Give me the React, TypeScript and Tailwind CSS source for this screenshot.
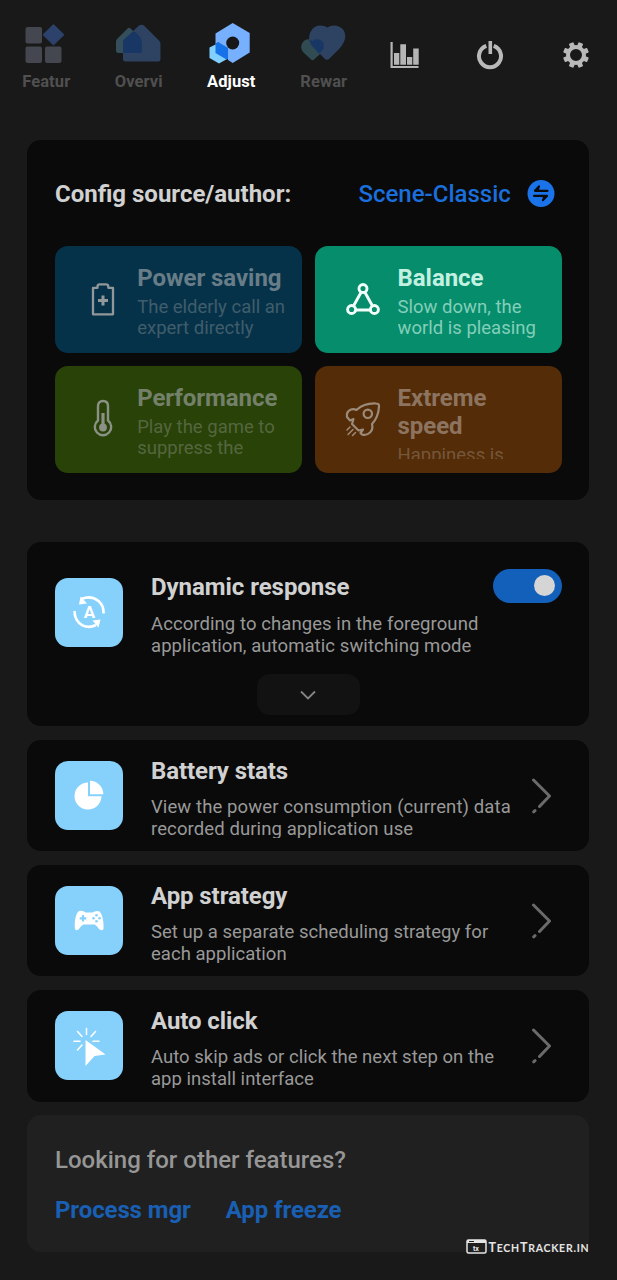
import type { ReactNode } from 'react';

function FeatureIcon() {
  return (
    <svg className="block h-[44px] w-[48px]" viewBox="0 0 48 44">
      <g fill="#44474f">
        <rect x="3.5" y="5" width="16.5" height="16.5" rx="2" />
        <rect x="3.5" y="24.5" width="16.5" height="16.5" rx="2" />
        <rect x="23" y="24.5" width="16.5" height="16.5" rx="2" />
      </g>
      <path d="M31.5 2.5 42 12.7 31.5 23 21 12.7Z" fill="#2c426b" stroke="#2c426b" strokeLinejoin="round" />
    </svg>
  );
}

function OverviewIcon() {
  return (
    <svg className="block h-[44px] w-[48px]" viewBox="0 0 48 44">
      <path d="M2 17 12.5 6.5Q14 5 15.5 6.500L26 16.500Q28 19 28 22V31H3.500Q1 31 1 28.500V20Q1 18 2 17Z" fill="#344e5b" />
      <path d="M8 18.500 23.500 4Q26.500 1.500 29.500 4L44 18.500Q45.500 20 45.500 22V37Q45.500 39.500 43 39.500H10.500Q8 39.500 8 37Z" fill="#2d4361" />
      <path d="M8 18.500 17.500 10Q19.500 9 21.500 11L25 15Q27 18 27 23V28.500Q27 31 24.500 31H8Z" fill="#193764" />
    </svg>
  );
}

function AdjustIcon() {
  return (
    <svg className="block h-[44px] w-[48px]" viewBox="0 0 48 44">
      <path d="M12.500 20.500 2.500 25.500V36L12 41.500 21 36.500V26Z" fill="#82d0ff" />
      <path d="M25.700 1 42.700 11V30.500L25.700 41 21 38V26L12 20.500 8.500 22V11.500Z" fill="#77b0ff" />
      <path d="M11 20 21 26V36.500L19.500 37.500 8.500 31V21.500Z" fill="#1672e8" />
      <circle cx="25.700" cy="21" r="6.500" fill="#171717" />
    </svg>
  );
}

function RewardIcon() {
  return (
    <svg className="block h-[44px] w-[48px]" viewBox="0 0 48 44">
      <path d="M3 20C6 16 10 17 12.500 19C16 16 21 17 23 20C26 25 23 29 19 33L14 37.500Q12.500 39 11 37.500L4 31C1 28 0 24 3 20Z" fill="#304b52" />
      <path d="M12 7.500C16 2 23 3 27.500 5.500C32 2 40 3 43.500 8C47 14 45 20 40 26L29.500 36.500Q27 39 24.500 36.500L13 25C8 20 8 13 12 7.500Z" fill="#2d4361" />
      <path d="M9.500 17.800 12.500 19C16 16 21 17 23 20C25 25 23 29 19 31.500L13 25Q10 22 9.500 17.800Z" fill="#193764" />
    </svg>
  );
}

function StatsIcon() {
  return (
    <svg className="block size-[30px]" viewBox="0 0 30 30" fill="#b5b5b5">
      <path d="M.5 2h2.200v24h25.800V28H.5z" />
      <path d="M4 13h5.300v11.800h-5.300zM10.300 4.200h5.700v20.600h-5.700zM17 17h5.300v7.800h-5.300zM23.200 8.500h5.500v16.300h-5.500z" />
    </svg>
  );
}

function PowerIcon() {
  return (
    <svg className="block size-[30px]" viewBox="0 0 30 30" fill="none" stroke="#b9b9b9">
      <path d="M10.300 5.900A11 11 0 1 0 17.700 5.900" strokeWidth="4" />
      <path d="M14.300 1v13" strokeWidth="3.600" />
    </svg>
  );
}

function GearIcon() {
  return (
    <svg className="block size-[30px]" viewBox="-15 -15 30 30" fill="#b9b9b9">
      <circle r="8" fill="none" stroke="#b9b9b9" strokeWidth="4" />
      {[22.5, 67.5, 112.5, 157.5, 202.5, 247.5, 292.5, 337.5].map((a) => (
        <path key={a} d="M-2.500-8.500V-12Q-2.500-13-1.500-13H1.500Q2.500-13 2.500-12V-8.500Z" transform={`rotate(${a})`} />
      ))}
    </svg>
  );
}

function BatteryIcon() {
  return (
    <svg className="block h-[34px] w-[24px]" viewBox="0 0 24 34" fill="none" stroke="#929799" strokeWidth="2.300">
      <path d="M2 5.800H6.500V4.500Q6.500 2.300 8.700 2.300H15Q17.300 2.300 17.300 4.500V5.800H22V32.300H2Z" strokeLinejoin="round" />
      <path d="M12 13.500v10M7 18.500h10" strokeWidth="3" />
    </svg>
  );
}

function BalanceIcon() {
  return (
    <svg className="block size-[36px]" viewBox="0 0 36 36" fill="none" stroke="#f2fffa" strokeWidth="2.900">
      <circle cx="18" cy="7.500" r="4" />
      <circle cx="6.600" cy="28.500" r="4" />
      <circle cx="29.400" cy="28.500" r="4" />
      <path d="M16 11.500 8.600 24.700M20 11.500l7.400 13.200M10.600 29h14.800" />
    </svg>
  );
}

function ThermometerIcon() {
  return (
    <svg className="block h-[40px] w-[24px]" viewBox="0 0 24 40" fill="none" stroke="#8b9185" strokeWidth="2.400">
      <path d="M7 7Q7 2 12 2T17 7V21.500A8.200 8.200 0 1 1 7 21.500Z" />
      <path d="M12 14v14" strokeWidth="3.200" />
      <circle cx="12" cy="28.500" r="3.900" fill="#8b9185" stroke="none" />
    </svg>
  );
}

function RocketIcon() {
  return (
    <svg className="block size-[38px]" viewBox="0 0 38 38" fill="none" stroke="#9c8b79" strokeWidth="2.200" strokeLinejoin="round" strokeLinecap="round">
      <path d="M9.500 19 6 20.500 3 17Q2 11.500 7 9.500Q9.500 8.500 12.500 10Q20 3 32 3.500Q35.500 3.500 35 6.500Q34.500 17 28 24Q29.500 29 26 32.500Q22 36 18 34.500L16.500 33 19 29.500 14.500 30.500 8 24Z" />
      <circle cx="23.800" cy="13.800" r="4.200" />
      <path d="M6 27 3 30M9 29.500 4 34.500M11.500 32.500 8.500 35.500" strokeWidth="1.500" />
    </svg>
  );
}

function SwapIcon() {
  return (
    <svg className="block size-[28px]" viewBox="0 0 28 28">
      <circle cx="14" cy="13.500" r="13.500" fill="#1a73e8" />
      <path d="M20.500 10.800H8L12 6.500M7 15.800H20L16 20.100" fill="none" stroke="#0a0a0a" strokeWidth="2.200" strokeLinecap="round" strokeLinejoin="round" />
      <path d="M7 11 12.300 5.500v5.500ZM21 15.700 15.700 21.200v-5.500Z" fill="#0a0a0a" />
    </svg>
  );
}

function AutoSwitchIcon() {
  return (
    <svg className="block size-[36px]" viewBox="0 0 36 36">
      <path d="M11 4.800Q20 1 27.500 7Q33 12 32.500 19.500M3.500 17Q3.500 27 11.500 31.300Q18 34.500 25 31" fill="none" stroke="#fff" strokeWidth="2.600" />
      <path d="M9.500 2.500 8 10.500 16 9.500ZM21.500 26.500 29.500 25.500 27.500 33.500Z" fill="#fff" />
      <text x="18.500" y="24" textAnchor="middle" fill="#fff" fontSize="17" fontWeight="700" fontFamily="Roboto, sans-serif">A</text>
    </svg>
  );
}

function PieIcon() {
  return (
    <svg className="block size-[36px]" viewBox="0 0 36 36" fill="#fff">
      <path d="M17 5.500V19.300H30.500A13.500 13.500 0 1 1 17 5.500Z" />
      <path d="M19 3.700A13.500 13.500 0 0 1 32.300 17.200H19Z" />
    </svg>
  );
}

function GamepadIcon() {
  return (
    <svg className="block size-[36px]" viewBox="0 0 36 36">
      <path d="M8 9Q12 8 14.500 10.500H21.500Q25 8 28.500 9.500C31.500 12 33 21 32.500 27Q31 29.500 28 27Q25 22.500 23 22.500H13Q11 22.500 8 27Q5 29.500 4 27C3 20 5 10.500 8 9Z" fill="#fff" />
      <path d="M12 13v6.500M8.700 16.300h6.600" stroke="#86d1fc" strokeWidth="2.200" />
      <g fill="#86d1fc"><circle cx="25.500" cy="13.300" r="1.300" /><circle cx="22.500" cy="16.300" r="1.300" /><circle cx="28.500" cy="16.300" r="1.300" /><circle cx="25.500" cy="19.300" r="1.300" /></g>
    </svg>
  );
}

function ClickIcon() {
  return (
    <svg className="block size-[42px]" viewBox="0 0 42 42">
      <path d="M17.500 15 37.500 29.500 26.500 31 17.500 41Z" fill="#fff" />
      <path d="M18.500 3.500v6M9.500 6.500 14 11.500M27.500 6.500 23 11.500M6 16.300h6M25 16.300h6M14 20 9.500 25" stroke="#fff" strokeWidth="1.500" strokeLinecap="round" />
    </svg>
  );
}

function Chevron() {
  return (
    <svg className="block h-[36px] w-[22px] shrink-0" viewBox="0 0 22 36" fill="none" stroke="#6b6b6b" strokeWidth="2.700" strokeLinecap="round">
      <path d="M3.500 2 19.500 18 9.500 28.500M3.700 33.800 5 32.700" strokeLinejoin="round" strokeWidth="3" />
    </svg>
  );
}

function Tab({ icon, label, active }: { icon: ReactNode; label: string; active?: boolean }) {
  return (
    <div className="flex w-[92.500px] flex-col items-center">
      {icon}
      <span className={`mt-[6px] text-[16.500px] font-bold leading-[20px] tracking-[0.100px] ${active ? 'text-white' : 'text-[#505050]'}`}>{label}</span>
    </div>
  );
}

function ModeTile({ icon, title, text, tone, titleTone, textTone }: { icon: ReactNode; title: ReactNode; text: ReactNode; tone: string; titleTone: string; textTone: string }) {
  return (
    <div className={`flex h-[106.500px] w-[246.700px] rounded-[13px] ${tone}`}>
      <div className="ml-[27.500px] flex w-[41px] shrink-0 items-center justify-center">{icon}</div>
      <div className="mt-[17.600px] ml-[13.700px] h-[75.500px] overflow-hidden whitespace-nowrap">
        <div className={`text-[24px] font-bold leading-[28px] tracking-[-0.050px] ${titleTone}`}>{title}</div>
        <div className={`mt-[5px] text-[18.500px] leading-[21.500px] ${textTone}`}>{text}</div>
      </div>
    </div>
  );
}

function IconBox({ children }: { children: ReactNode }) {
  return <div className="flex size-[68.500px] shrink-0 items-center justify-center rounded-[13px] bg-[#86d1fc]">{children}</div>;
}

function FeatureRow({ icon, title, tracking, first, second }: { icon: ReactNode; title: string; tracking: string; first: string; second: string }) {
  return (
    <section className="flex h-[111.200px] rounded-[14px] bg-[#0a0a0a] pt-[21px] pl-[27.600px]">
      <IconBox>{icon}</IconBox>
      <div className="-mt-[4px] ml-[27.500px] w-[378px] whitespace-nowrap">
        <h2 className="text-[24px] font-bold leading-[28px] tracking-[-0.080px] text-[#d1d1d1]">{title}</h2>
        <p className={`mt-[12px] h-[40.500px] overflow-hidden text-[18.500px] leading-[21.500px] text-[#999] ${tracking}`}>{first}<br />{second}</p>
      </div>
      <div className="mt-[16.500px] ml-[1px]"><Chevron /></div>
    </section>
  );
}

export default function App() {
  return (
    <div className="h-[1280px] w-[617px] overflow-hidden bg-[#191919] font-['Roboto',sans-serif]">
      <header className="flex h-[140px] pt-[22px]">
        <Tab icon={<FeatureIcon />} label="Featur" />
        <Tab icon={<OverviewIcon />} label="Overvi" />
        <Tab icon={<AdjustIcon />} label="Adjust" active />
        <Tab icon={<RewardIcon />} label="Rewar" />
        <div className="mt-[18px] ml-[20px] flex gap-[55.500px]">
          <StatsIcon />
          <PowerIcon />
          <GearIcon />
        </div>
      </header>

      <main className="ml-[27.400px] w-[562px]">
        <section className="h-[360px] rounded-[14px] bg-[#0a0a0a] px-[27.600px] pt-[38px]">
          <div className="flex h-[32px] items-center">
            <h1 className="text-[24px] font-bold leading-[28px] text-[#d1d1d1]">Config source/author:</h1>
            <span className="ml-auto text-[24px] font-medium leading-[28px] text-[#1a6fdd]">Scene-Classic</span>
            <div className="mr-[7px] ml-[16px]"><SwapIcon /></div>
          </div>
          <div className="mt-[36px] grid grid-cols-[246.700px_246.700px] gap-[13.700px]">
            <ModeTile icon={<BatteryIcon />} title="Power saving" text={<>The elderly call an<br />expert directly</>} tone="bg-[#053249]" titleTone="text-[#687d87]" textTone="text-[#405d6b]" />
            <ModeTile icon={<BalanceIcon />} title="Balance" text={<>Slow down, the<br />world is pleasing</>} tone="bg-[#068d6c]" titleTone="text-[#c3f1e1]" textTone="text-[#83cfba]" />
            <ModeTile icon={<ThermometerIcon />} title="Performance" text={<>Play the game to<br />suppress the</>} tone="bg-[#284208]" titleTone="text-[#74806a]" textTone="text-[#55663f]" />
            <ModeTile icon={<RocketIcon />} title={<>Extreme<br />speed</>} text="Happiness is" tone="bg-[#542c08]" titleTone="text-[#8c7460]" textTone="text-[#75573b]" />
          </div>
        </section>

        <section className="mt-[41.500px] h-[184.500px] rounded-[14px] bg-[#0a0a0a] pt-[27px] pl-[27.600px]">
          <div className="flex h-[105.500px]">
            <div className="mt-[9.500px]"><IconBox><AutoSwitchIcon /></IconBox></div>
            <div className="mt-[4.500px] ml-[27.500px] w-[342.500px] whitespace-nowrap">
              <h2 className="text-[24px] font-bold leading-[28px] tracking-[-0.050px] text-[#d1d1d1]">Dynamic response</h2>
              <p className="mt-[13px] text-[18.500px] leading-[21.500px] tracking-[0.080px] text-[#999]">According to changes in the foreground<br />application, automatic switching mode</p>
            </div>
            <div className="flex h-[34.500px] w-[68.500px] items-center justify-end rounded-full bg-[#1260ba] pr-[6.500px]">
              <div className="size-[21px] rounded-full bg-[#d5d5d5]" />
            </div>
          </div>
          <div className="ml-[202px] flex h-[41px] w-[103px] items-center justify-center rounded-[13px] bg-[#121212]">
            <svg className="block h-[10px] w-[16px]" viewBox="0 0 16 10" fill="none" stroke="#858585" strokeWidth="1.800"><path d="m1 1.500 7 7 7-7" /></svg>
          </div>
        </section>

        <div className="mt-[14px] flex flex-col gap-[14px]">
          <FeatureRow icon={<PieIcon />} title="Battery stats" tracking="tracking-[0.100px]" first="View the power consumption (current) data" second="recorded during application use" />
          <FeatureRow icon={<GamepadIcon />} title="App strategy" tracking="tracking-[0.030px]" first="Set up a separate scheduling strategy for" second="each application" />
          <FeatureRow icon={<ClickIcon />} title="Auto click" tracking="tracking-[0.020px]" first="Auto skip ads or click the next step on the" second="app install interface" />
        </div>

        <section className="mt-[13.700px] h-[137px] rounded-[14px] bg-[#202020] pt-[31px] pl-[27.600px]">
          <h2 className="text-[24px] font-medium leading-[28px] text-[#969696]">Looking for other features?</h2>
          <div className="mt-[21.500px] flex gap-[35px] text-[24px] font-bold leading-[28px] tracking-[-0.100px] text-[#195fb3]">
            <span>Process mgr</span>
            <span>App freeze</span>
          </div>
          <div className="mt-[13.500px] ml-[411.500px] flex items-center whitespace-nowrap text-[#e5e5e5]">
            <svg className="block h-[15px] w-[21px] shrink-0" viewBox="0 0 21 15"><rect x="1" y="1" width="19" height="13" rx="1.500" fill="none" stroke="currentColor" strokeWidth="1.500" /><path d="M1 1h19v3H1z" fill="currentColor" /><path d="M3 2.500h5" stroke="#222" /><text x="7" y="12" fill="currentColor" fontSize="7" fontWeight="700">tx</text></svg>
            <span className="mt-[3px] ml-[1px] font-['Lato',sans-serif] text-[12.500px] font-bold leading-[15px] tracking-[0.750px]">T<span className="text-[10.500px]">ECH</span>T<span className="text-[10.500px]">RACKER.IN</span></span>
          </div>
        </section>
      </main>
    </div>
  );
}
